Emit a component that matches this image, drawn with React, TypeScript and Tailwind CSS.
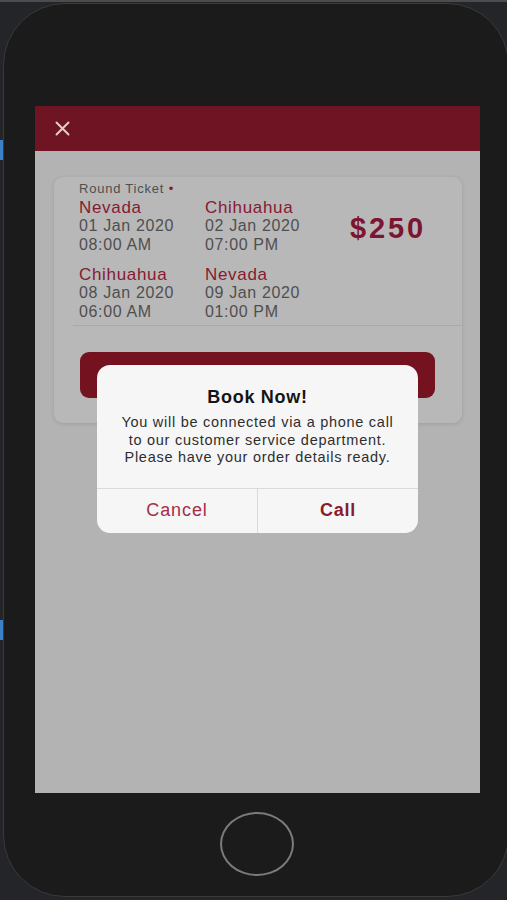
import React from "react";

const maroonText = "text-[#861a31]";
const greyText = "text-[#4f4f4f]";

function Leg({ city, date, time }: { city: string; date: string; time: string }) {
  return (
    <div className="flex flex-col">
      <span className={`text-[17px] leading-[18.5px] tracking-[0.04em] ${maroonText}`}>{city}</span>
      <span className={`text-[16px] leading-[18.5px] tracking-[0.04em] ${greyText}`}>{date}</span>
      <span className={`text-[16px] leading-[18.5px] tracking-[0.04em] ${greyText}`}>{time}</span>
    </div>
  );
}

export default function App() {
  return (
    <div
      className="w-[507px] h-[900px] bg-[#232528] overflow-hidden relative"
      style={{ fontFamily: '"Liberation Sans", Arial, sans-serif' }}
    >
      <div className="absolute top-0 left-0 w-full h-[2px] bg-[#4b4c4e]" />
      <div className="absolute left-0 top-[140px] w-[3px] h-[20px] bg-[#3d7fc4]" />
      <div className="absolute left-0 top-[620px] w-[3px] h-[20px] bg-[#3d7fc4]" />
      <div className="pt-[3px] pl-[3px]">
        <div className="w-[506px] h-[894px] rounded-[62px] bg-[#1b1b1b] border border-[#3a3a3a] pt-[102px]">
          {/* Screen */}
          <div className="relative ml-[31px] w-[445px] h-[687px] bg-[#b3b3b3] flex flex-col">
            {/* Header */}
            <div className="h-[45px] bg-[#6e1423] flex items-center pl-[20px] shrink-0">
              <svg width="15" height="15" viewBox="0 0 15 15" fill="none">
                <path d="M1.5 1.5 L13.5 13.5 M13.5 1.5 L1.5 13.5" stroke="#dccfd1" strokeWidth="2" strokeLinecap="round" />
              </svg>
            </div>
            {/* Card */}
            <div className="mt-[26px] ml-[19px] w-[408px] rounded-[9px] bg-[#b8b8b8] shadow-[0_1px_4px_rgba(0,0,0,0.12)] pt-[3px] pb-[25px]">
              <div className="pl-[25px] pr-[20px] pb-[4px]">
                <div className={`text-[13px] leading-[18.5px] tracking-[0.06em] ${greyText}`}>
                  Round Ticket <span className={maroonText}>•</span>
                </div>
                <div className="flex items-center">
                  <div className="w-[126px]">
                    <Leg city="Nevada" date="01 Jan 2020" time="08:00 AM" />
                  </div>
                  <div className="w-[145px]">
                    <Leg city="Chihuahua" date="02 Jan 2020" time="07:00 PM" />
                  </div>
                  <div className="text-[29px] font-bold tracking-[0.1em] text-[#7c1530] leading-[30px] mt-[3px]">
                    $250
                  </div>
                </div>
                <div className="flex mt-[11.5px]">
                  <div className="w-[126px]">
                    <Leg city="Chihuahua" date="08 Jan 2020" time="06:00 AM" />
                  </div>
                  <div className="w-[145px]">
                    <Leg city="Nevada" date="09 Jan 2020" time="01:00 PM" />
                  </div>
                </div>
              </div>
              <div className="ml-[19px] h-px bg-[#a9a9a9]" />
              <div className="mt-[26px] ml-[26px] w-[355px] h-[46px] rounded-[9px] bg-[#74131f]" />
            </div>

            {/* Dialog */}
            <div className="absolute left-[62px] top-[259px] w-[321px] h-[168px] rounded-[13px] bg-[#f6f6f6] flex flex-col overflow-hidden">
              <div className="pt-[21px] pb-[21px] px-[10px] flex flex-col items-center">
                <div className="text-[18px] leading-[22px] font-bold tracking-[0.04em] text-[#151515]">Book Now!</div>
                <div className="mt-[6px] text-[14.5px] leading-[17.5px] tracking-[0.05em] text-[#2e2e2e] text-center whitespace-nowrap">
                  <div>You will be connected via a phone call</div>
                  <div>to our customer service department.</div>
                  <div>Please have your order details ready.</div>
                </div>
              </div>
              <div className="h-px bg-[#dadada]" />
              <div className="flex flex-1">
                <div className="flex-1 flex items-center justify-center text-[18px] tracking-[0.05em] text-[#a52d48]">
                  Cancel
                </div>
                <div className="w-px bg-[#dadada]" />
                <div className="flex-1 flex items-center justify-center text-[18px] font-bold tracking-[0.04em] text-[#8a1a30]">
                  Call
                </div>
              </div>
            </div>
          </div>
          {/* Home button */}
          <div className="mt-[19px] ml-[216px] w-[74px] h-[64px] rounded-[50%] border-2 border-[#7b7b7b]" />
        </div>
      </div>
    </div>
  );
}
